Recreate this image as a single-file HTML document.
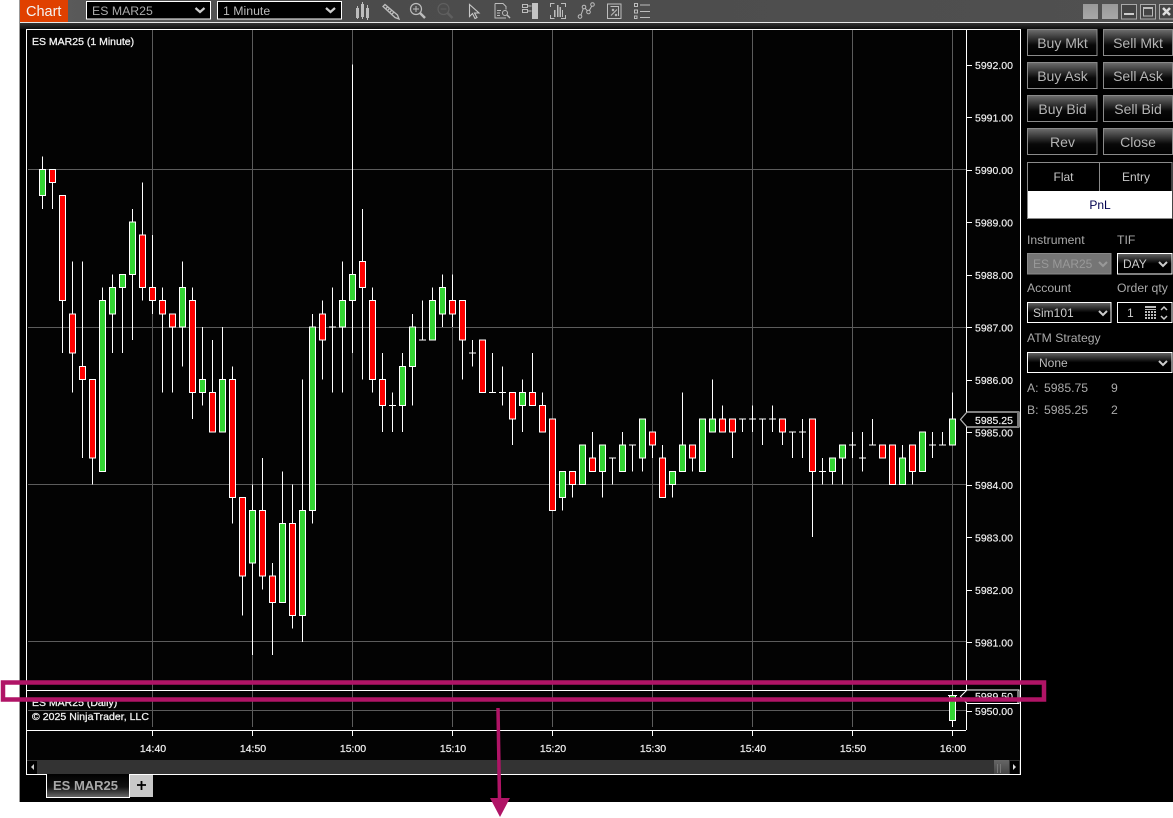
<!DOCTYPE html>
<html><head><meta charset="utf-8"><style>
html,body{margin:0;padding:0;background:#fff;width:1173px;height:818px;overflow:hidden}
svg{display:block}
text{font-family:"Liberation Sans",sans-serif}
.p{font-size:10.5px;fill:#eee;stroke:#eee;stroke-width:.18px}
.t{font-size:10.5px;fill:#eee;stroke:#eee;stroke-width:.25px;text-anchor:middle}
.c{font-size:10.5px;fill:#f0f0f0;stroke:#f0f0f0;stroke-width:.3px}
.b{font-size:14px;fill:#b4b4b4;text-anchor:middle}
.l{font-size:12.2px;fill:#aaa}
.w{font-size:12px;fill:#c8c8c8;text-anchor:middle}
.ic{fill:none;stroke:#bdbdbd;stroke-width:1}
</style></head><body>
<svg width="1173" height="818" viewBox="0 0 1173 818" xmlns="http://www.w3.org/2000/svg">
<defs>
<linearGradient id="btn" x1="0" y1="0" x2="0" y2="1"><stop offset="0" stop-color="#6e6e6e"/><stop offset=".6" stop-color="#080808"/><stop offset="1" stop-color="#000"/></linearGradient>
<linearGradient id="sel" x1="0" y1="0" x2="0" y2="1"><stop offset="0" stop-color="#666"/><stop offset=".5" stop-color="#000"/><stop offset="1" stop-color="#000"/></linearGradient>
<linearGradient id="tab" x1="0" y1="0" x2="0" y2="1"><stop offset="0" stop-color="#000"/><stop offset=".55" stop-color="#111"/><stop offset="1" stop-color="#6a6a6a"/></linearGradient>
<linearGradient id="tb" x1="0" y1="0" x2="1" y2="0"><stop offset="0" stop-color="#5c5c5c"/><stop offset=".3" stop-color="#4b4b4b"/><stop offset="1" stop-color="#505050"/></linearGradient>
<linearGradient id="sub" x1="0" y1="0" x2="0" y2="1"><stop offset="0" stop-color="#333"/><stop offset="1" stop-color="#0c0c0c"/></linearGradient>
<linearGradient id="sq" x1="0" y1="0" x2="0" y2="1"><stop offset="0" stop-color="#999"/><stop offset="1" stop-color="#a8a8a8"/></linearGradient>
<linearGradient id="thumb" x1="0" y1="0" x2="0" y2="1"><stop offset="0" stop-color="#666"/><stop offset="1" stop-color="#444"/></linearGradient>
</defs>

<rect x="0" y="0" width="1173" height="818" fill="#fff"/>
<rect x="20" y="0" width="1153" height="802" fill="#000"/>
<rect x="19" y="0" width="1" height="802" fill="#999"/>

<!-- toolbar -->
<rect x="20" y="0" width="1153" height="22" fill="url(#tb)"/>
<rect x="20" y="22" width="1153" height="1" fill="#e8e8e8"/>
<rect x="20" y="23" width="1153" height="6" fill="url(#sub)"/>
<rect x="20" y="0" width="48" height="22" fill="#e04000"/>
<text x="26" y="16" style="font-size:14.5px" fill="#f4f4f4">Chart</text>

<rect x="86.5" y="1.5" width="124" height="17.500" fill="#000" stroke="#fff"/>
<text x="92" y="15" style="font-size:12.3px" fill="#aaa">ES MAR25</text>
<path d="M195.500 8l4.500 4 4.500-4" fill="none" stroke="#ccc" stroke-width="2.200"/>
<rect x="217.5" y="1.500" width="124" height="17.500" fill="#000" stroke="#fff"/>
<text x="223" y="15" style="font-size:12.300px" fill="#bbb">1 Minute</text>
<path d="M326 8l4.500 4 4.500-4" fill="none" stroke="#ccc" stroke-width="2.200"/>

<!-- toolbar icons -->
<g fill="#bdbdbd">
<path d="M356 8h3v10h-3zM357 6h1v2h-1zM357 18h1v1h-1zM361 4h3v13h-3zM362 2h1v2h-1zM362 17h1v2h-1zM366 8h3v10h-3zM367 5h1v3h-1zM367 18h1v2h-1z"/>
</g>
<path d="M385 4.500l-2 2 12 11 4 1.500-1.500-4zM386 8.500l2-2M388 10l2-2M390 12l2-2M392 14l2-2" fill="none" stroke="#bdbdbd" stroke-width="1.300"/>
<g class="ic"><circle cx="416" cy="9" r="5.500" stroke-width="1.200"/><path d="M413 9h6M416 6v6"/></g>
<path d="M420 13l5 5" stroke="#bdbdbd" stroke-width="2.500"/>
<g fill="none" stroke="#5f5f5f"><circle cx="443.500" cy="9" r="5.500" stroke-width="1.200"/><path d="M440.500 9h6"/><path d="M447.500 13l5 5" stroke-width="2.500"/></g>
<path d="M469.500 4.500v12l3-3 2.500 5 2-1-2.500-4.500h4.500z" fill="none" stroke="#c8c8c8" stroke-width="1.100"/>
<g class="ic"><path d="M495 3.500h8l3 3v3M495 3.500v14.500h11"/><path d="M497 10.500h4M497 13h3M497 15.500h3"/><circle cx="505" cy="13" r="2.500"/></g>
<path d="M507 15l3 3" stroke="#bdbdbd" stroke-width="1.500"/>
<g class="ic"><path d="M522.500 4.500h5v3h-5zM522.500 9.500h5v3h-5zM527.500 6h4M527.500 11h4"/></g>
<rect x="532" y="3" width="6" height="16" fill="#c4c4c4"/>
<g class="ic"><path d="M550.500 7v-3.500h4M561 3.500h4.500v3.500M550.500 15v3.500h4M561 18.500h4.500v-3.500"/></g>
<path d="M554 10h1.500v7h-1.500zM557 5h1.500v12h-1.500zM559.500 7h1.500v10h-1.500zM562 10h1v7h-1z" fill="#bdbdbd"/>
<g class="ic"><circle cx="580" cy="16.500" r="1.800"/><circle cx="584" cy="7" r="1.800"/><circle cx="588.500" cy="12" r="1.800"/><circle cx="592.500" cy="4.500" r="1.800"/><path d="M581 15l2.300-6.500M585.200 8.300l2.200 2.500M589.300 10.500l2.500-4.500"/></g>
<g class="ic"><path d="M607.500 4h13.500v14.500h-13.500z"/><path d="M610.500 6.500h8v9.500"/><path d="M611 15.500l6-6M612 9l2 2M614 9l-2 2M615 14l2 2M617 14l-2 2"/></g>
<g class="ic"><path d="M634.500 3.500h3v3h-3zM634.500 10h3v3h-3zM634.500 16h2.500v2.500h-2.500zM640 5h10M640 11.500h10M640 17.500h10"/></g>

<!-- window buttons -->
<rect x="1083" y="4" width="15" height="15" fill="url(#sq)"/>
<rect x="1102" y="4" width="16" height="15" fill="url(#sq)"/>
<rect x="1121.500" y="4.500" width="15" height="14.500" fill="#444" stroke="#aaa"/>
<rect x="1124" y="13" width="10" height="2" fill="#ccc"/>
<rect x="1140.500" y="4.500" width="15" height="14.500" fill="#444" stroke="#aaa"/>
<rect x="1143.500" y="7.500" width="9" height="8.500" fill="none" stroke="#bbb"/><rect x="1143" y="7" width="10" height="2" fill="#bbb"/>
<rect x="1159.500" y="4.500" width="14" height="14.500" fill="#444" stroke="#aaa"/>
<path d="M1163 8l7 7M1170 8l-7 7" stroke="#ddd" stroke-width="2.500"/>

<!-- chart frame -->
<rect x="26.500" y="29.500" width="994" height="745" fill="#030303" stroke="#fff"/>

<!-- grid -->
<g stroke="#5c5c5c" stroke-width="1">
<path d="M152.500 30V727M252.500 30V727M352.500 30V727M452.500 30V727M552.500 30V727M652.500 30V727M752.500 30V727M852.500 30V727M952.500 30V727"/>
<path d="M28 169.500H966M28 327.500H966M28 484.500H966M28 641.500H966M28 710.500H966"/>
</g>

<!-- panel lines -->
<path d="M966.500 29V730M27 690.500H966M27 730.500H966" stroke="#fff" fill="none"/>

<!-- candles: y in ticks -->
<g transform="translate(0,169.500) scale(1,13.12)" shape-rendering="crispEdges">
<path fill="none" stroke="#fff" vector-effect="non-scaling-stroke" d="M42.500-1V3M52.500 0V3M62.500 2V14M72.500 7V17M82.500 7V22M92.500 16V24M102.500 9V23M112.500 8V14M122.500 8V14M132.500 3V13M142.500 1V10M152.500 5V11M162.500 9V17M172.500 11V17M182.500 7V15M192.500 9V19M202.500 12V18M212.500 13V20M222.500 12V20M232.500 15V27M242.500 25V34M252.500 24V37M262.500 22V32M272.500 30V37M282.500 23V33M292.500 24V35M302.500 16V36M312.500 11V27M322.500 10V16M332.500 9V17M329 12h7M342.500 7V17M352.500-8V14M362.500 3V16M372.500 9V17M382.500 14V20M392.500 17V20M389 18h7M402.500 14V20M412.500 11V18M422.500 10V13M419 13h7M432.500 9V13M442.500 8V12M452.500 8V12M462.500 10V16M472.500 13V15M469 14h7M482.500 13V17M492.500 14V17M489 17h7M502.500 15V18M499 17h7M512.500 17V21M522.500 16V20M532.500 14V18M542.500 17V20M552.500 19V26M562.500 23V26M572.500 23V25M582.500 21V24M592.500 20V23M602.500 21V25M612.500 22V24M609 22h7M622.500 20V23M632.500 21V23M629 21h7M642.500 19V23M652.500 20V22M662.500 21V25M672.500 23V25M682.500 17V23M692.500 21V23M702.500 19V23M712.500 16V20M722.500 18V20M732.500 19V22M742.500 19V20M739 19h7M752.500 18V20M749 19h7M762.500 19V21M759 19h7M772.500 18V20M769 19h7M782.500 19V21M792.500 20V22M789 20h7M802.500 19V22M799 20h7M812.500 19V28M822.500 22V24M819 23h7M832.500 22V24M842.500 21V24M852.500 20V22M849 21h7M862.500 20V23M859 22h7M872.500 19V21M869 21h7M882.500 21V22M892.500 21V24M902.500 21V24M912.500 21V24M922.500 20V23M932.500 20V22M929 21h7M942.500 20V21M939 21h7M952.500 17V21"/>
<path fill="#33d633" stroke="#fff" vector-effect="non-scaling-stroke" d="M39.500 0h6v2h-6zM99.500 10h6v13h-6zM109.500 9h6v2h-6zM119.500 8h6v1h-6zM129.500 4h6v4h-6zM179.500 9h6v3h-6zM199.500 16h6v1h-6zM219.500 16h6v4h-6zM249.500 26h6v4h-6zM279.500 27h6v6h-6zM299.500 26h6v8h-6zM309.500 12h6v14h-6zM339.500 10h6v2h-6zM349.500 8h6v2h-6zM399.500 15h6v3h-6zM409.500 12h6v3h-6zM429.500 10h6v3h-6zM439.500 9h6v2h-6zM519.500 17h6v1h-6zM559.500 23h6v2h-6zM579.500 21h6v3h-6zM599.500 21h6v2h-6zM619.500 21h6v2h-6zM639.500 19h6v3h-6zM669.500 23h6v1h-6zM679.500 21h6v2h-6zM699.500 19h6v4h-6zM709.500 19h6v1h-6zM829.500 22h6v1h-6zM839.500 21h6v1h-6zM899.500 22h6v2h-6zM919.500 20h6v3h-6zM949.500 19h6v2h-6z"/>
<path fill="#ff0000" stroke="#fff" vector-effect="non-scaling-stroke" d="M49.500 0h6v1h-6zM59.500 2h6v8h-6zM69.500 11h6v3h-6zM79.500 15h6v1h-6zM89.500 16h6v6h-6zM139.500 5h6v4h-6zM149.500 9h6v1h-6zM159.500 10h6v1h-6zM169.500 11h6v1h-6zM189.500 10h6v7h-6zM209.500 17h6v3h-6zM229.500 16h6v9h-6zM239.500 25h6v6h-6zM259.500 26h6v5h-6zM269.500 31h6v2h-6zM289.500 27h6v7h-6zM319.500 11h6v2h-6zM359.500 7h6v2h-6zM369.500 10h6v6h-6zM379.500 16h6v2h-6zM449.500 10h6v1h-6zM459.500 10h6v3h-6zM479.500 13h6v4h-6zM509.500 17h6v2h-6zM529.500 17h6v1h-6zM539.500 18h6v2h-6zM549.500 19h6v7h-6zM569.500 23h6v1h-6zM589.500 22h6v1h-6zM649.500 20h6v1h-6zM659.500 22h6v3h-6zM689.500 21h6v1h-6zM719.500 19h6v1h-6zM729.500 19h6v1h-6zM779.500 19h6v1h-6zM809.500 19h6v4h-6zM879.500 21h6v1h-6zM889.500 21h6v3h-6zM909.500 21h6v2h-6z"/>
</g>

<!-- lower panel candle -->
<path d="M952.500 691V727M948 695.500h9" stroke="#fff" fill="none"/>
<rect x="949.500" y="695.500" width="6" height="25" fill="#33d633" stroke="#fff"/>

<!-- price ticks and labels -->
<path d="M967 65.500h5M967 117.500h5M967 170.500h5M967 222.500h5M967 275.500h5M967 327.500h5M967 380.500h5M967 432.500h5M967 485.500h5M967 537.500h5M967 590.500h5M967 642.500h5M967 711.500h5" stroke="#fff"/>
<text class="p" x="975" y="69">5992.00</text>
<text class="p" x="975" y="121.500">5991.00</text>
<text class="p" x="975" y="174">5990.00</text>
<text class="p" x="975" y="226.500">5989.00</text>
<text class="p" x="975" y="279">5988.00</text>
<text class="p" x="975" y="331.500">5987.00</text>
<text class="p" x="975" y="384">5986.00</text>
<text class="p" x="975" y="436.500">5985.00</text>
<text class="p" x="975" y="489">5984.00</text>
<text class="p" x="975" y="541.500">5983.00</text>
<text class="p" x="975" y="594">5982.00</text>
<text class="p" x="975" y="646.500">5981.00</text>
<text class="p" x="975" y="715">5950.00</text>
<path d="M960.500 419.500l6.500-7.500h52v15h-52z" fill="#000" stroke="#fff"/>
<path d="M960.500 419.500l6.500-7.500M960.500 419.500l6.500 7.500" stroke="#aaa" fill="none"/>
<rect x="1017" y="412" width="2" height="15" fill="#777"/>
<text class="p" x="975" y="424">5985.25</text>
<path d="M960.500 696.500l6.500-6.500h52v13.500h-52z" fill="#000" stroke="#fff"/>
<rect x="1017" y="691" width="2" height="12" fill="#777"/>
<text class="p" x="975" y="700">5989.50</text>

<!-- chart text -->
<text class="c" x="32" y="45">ES MAR25 (1 Minute)</text>
<text class="c" x="32" y="706">ES MAR25 (Daily)</text>
<text class="c" x="32" y="720" textLength="117">© 2025 NinjaTrader, LLC</text>

<!-- time axis -->
<path d="M152.500 731v5M252.500 731v5M352.500 731v5M452.500 731v5M552.500 731v5M652.500 731v5M752.500 731v5M852.500 731v5M952.500 731v5" stroke="#fff"/>
<text class="t" x="153" y="752">14:40</text>
<text class="t" x="253" y="752">14:50</text>
<text class="t" x="353" y="752">15:00</text>
<text class="t" x="453" y="752">15:10</text>
<text class="t" x="553" y="752">15:20</text>
<text class="t" x="653" y="752">15:30</text>
<text class="t" x="753" y="752">15:40</text>
<text class="t" x="853" y="752">15:50</text>
<text class="t" x="953" y="752">16:00</text>

<!-- scrollbar -->
<rect x="27" y="760" width="993" height="14" fill="#333"/>
<rect x="27" y="761" width="10" height="13" fill="#000"/>
<path d="M34 764v6l-3-3z" fill="#ccc"/>
<rect x="994" y="760" width="15" height="14" fill="url(#thumb)"/>
<path d="M997.500 764v9M1000.500 764v9" stroke="#777"/>
<rect x="1010" y="761" width="9" height="13" fill="#000"/>
<path d="M1013 764v6l3-3z" fill="#ddd"/>

<!-- tab -->
<path d="M46.500 774v23.500h83V774" fill="url(#tab)" stroke="#fff"/>
<text x="53" y="790" style="font-size:13px;font-weight:bold" fill="#a8a8a8">ES MAR25</text>
<rect x="130" y="775" width="23" height="22" fill="#c8c8c8"/>
<path d="M137 785h9M141.500 781v9" stroke="#000" stroke-width="1.800"/>

<!-- order buttons -->
<g stroke="#8a8a8a" fill="url(#btn)">
<rect x="1027.500" y="29.500" width="69.500" height="26"/><rect x="1103.500" y="29.500" width="69" height="26"/>
<rect x="1027.500" y="62.500" width="69.500" height="26"/><rect x="1103.500" y="62.500" width="69" height="26"/>
<rect x="1027.500" y="95.500" width="69.500" height="26"/><rect x="1103.500" y="95.500" width="69" height="26"/>
<rect x="1027.500" y="128.500" width="69.500" height="26"/><rect x="1103.500" y="128.500" width="69" height="26"/>
</g>
<text class="b" x="1062.500" y="48">Buy Mkt</text><text class="b" x="1138" y="48">Sell Mkt</text>
<text class="b" x="1062.500" y="81">Buy Ask</text><text class="b" x="1138" y="81">Sell Ask</text>
<text class="b" x="1062.500" y="114">Buy Bid</text><text class="b" x="1138" y="114">Sell Bid</text>
<text class="b" x="1062.500" y="147">Rev</text><text class="b" x="1138" y="147">Close</text>

<!-- position table -->
<rect x="1027.500" y="162.500" width="144.500" height="56" fill="#000" stroke="#8a8a8a"/>
<path d="M1099.500 163v28" stroke="#8a8a8a"/>
<rect x="1028" y="191" width="144" height="27" fill="#fff"/>
<text class="w" x="1063.500" y="181">Flat</text>
<text class="w" x="1136" y="181">Entry</text>
<text x="1100" y="209" text-anchor="middle" style="font-size:12px" fill="#000050">PnL</text>

<!-- form -->
<text class="l" x="1027" y="244">Instrument</text>
<text class="l" x="1117" y="244">TIF</text>
<rect x="1027.500" y="253.500" width="83.500" height="20.500" fill="#757575" stroke="#8a8a8a"/>
<text x="1033" y="268" style="font-size:12px" fill="#999">ES MAR25</text>
<path d="M1099 262l4 4 4-4" fill="none" stroke="#999" stroke-width="2"/>
<rect x="1117.500" y="253.500" width="54.500" height="20.500" fill="url(#sel)" stroke="#fff"/>
<text x="1123" y="268" style="font-size:12px" fill="#ccc">DAY</text>
<path d="M1159 262l4 4 4-4" fill="none" stroke="#ccc" stroke-width="2"/>

<text class="l" x="1027" y="292">Account</text>
<text class="l" x="1117" y="292">Order qty</text>
<rect x="1027.500" y="302.500" width="83.500" height="20" fill="url(#sel)" stroke="#fff"/>
<text x="1033" y="317" style="font-size:12px" fill="#ccc">Sim101</text>
<path d="M1099 311l4 4 4-4" fill="none" stroke="#ccc" stroke-width="2"/>
<rect x="1117.500" y="302.500" width="54.500" height="20" fill="#000" stroke="#fff"/>
<text x="1127" y="317" style="font-size:12px" fill="#ccc">1</text>
<path d="M1145 306h11v2h-11zM1145 309h11v1h-11zM1145 311h2v2h-2zM1148 311h2v2h-2zM1151 311h2v2h-2zM1154 311h2v2h-2zM1145 314h2v2h-2zM1148 314h2v2h-2zM1151 314h2v2h-2zM1154 314h2v2h-2zM1145 317h2v2h-2zM1148 317h2v2h-2zM1151 317h2v2h-2zM1154 317h2v2h-2z" fill="#bbb"/>
<path d="M1161 310l3-3 3 3M1161 316l3 3 3-3" fill="none" stroke="#ccc" stroke-width="1.500"/>

<text class="l" x="1027" y="342">ATM Strategy</text>
<rect x="1027.500" y="352.500" width="144.500" height="20" fill="url(#sel)" stroke="#fff"/>
<text x="1039" y="367" style="font-size:12px" fill="#bbb">None</text>
<path d="M1159 361l4 4 4-4" fill="none" stroke="#ccc" stroke-width="2"/>

<text class="l" x="1027" y="392">A:</text><text class="l" x="1044" y="392">5985.75</text><text class="l" x="1111" y="392">9</text>
<text class="l" x="1027" y="414">B:</text><text class="l" x="1044" y="414">5985.25</text><text class="l" x="1111" y="414">2</text>

<!-- annotation -->
<rect x="3" y="682.500" width="1041" height="17" fill="none" stroke="#b01466" stroke-width="4.500"/>
<path d="M498 708L499.500 800" stroke="#b01466" stroke-width="3.500" fill="none"/>
<path d="M490 798h20l-10 19z" fill="#b01466"/>
</svg>
</body></html>
